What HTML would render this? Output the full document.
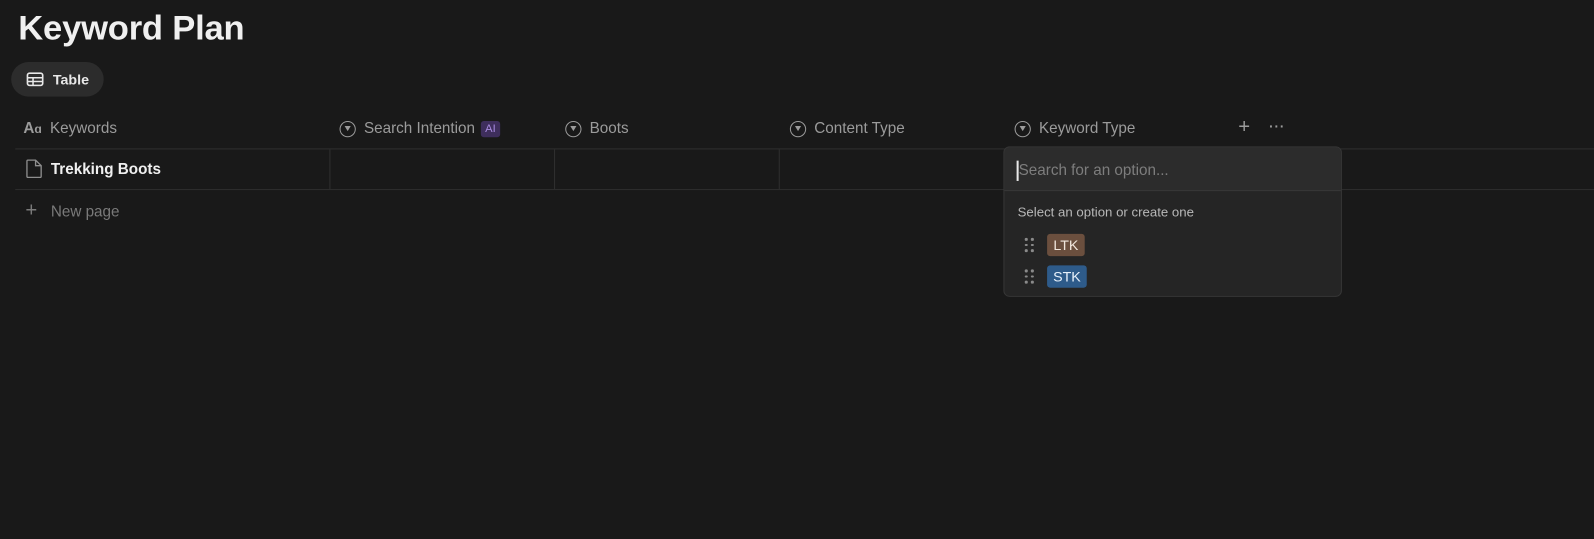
<!DOCTYPE html>
<html><head><meta charset="utf-8"><style>
*{box-sizing:border-box;margin:0;padding:0}
body{width:1594px;height:539px;background:#191919;font-family:"Liberation Sans",sans-serif;color:#d4d4d4;position:relative;overflow:hidden}
#w{position:absolute;left:0;top:0;width:1568px;height:530px;transform:scale(1.0166);transform-origin:0 0}
.abs{position:absolute}
h1{position:absolute;left:18px;top:9px;font-size:34px;font-weight:bold;color:#f0f0f0;letter-spacing:-0.2px}
.tab{left:11px;top:61px;width:91px;height:34px;border-radius:17px;background:#2c2c2c;color:#e8e8e8;font-size:14px;font-weight:bold;display:flex;align-items:center;padding-left:15px;gap:9px}
.hd{top:118px;font-size:15px;color:#9b9b9b;display:flex;align-items:center;gap:8px}
.ico{width:16px;height:16px;border:1.6px solid #9b9b9b;border-radius:50%;position:relative}
.ico:after{content:"";position:absolute;left:3.5px;top:4px;border-left:3px solid transparent;border-right:3px solid transparent;border-top:5px solid #9b9b9b}
.hline{height:1px;background:#2f2f2f}
.vline{width:1px;background:#2f2f2f;top:147px;height:39px}
.dots{display:grid;grid-template-columns:3px 3px;gap:3px 3px}
.dots i{width:2.5px;height:2.5px;border-radius:50%;background:#8a8a8a;display:block}
</style></head><body><div id="w">
<h1>Keyword Plan</h1>
<div class="abs tab"><svg width="17" height="14" viewBox="0 0 17 14"><rect x="1" y="1" width="15" height="12" rx="2" fill="none" stroke="#e8e8e8" stroke-width="1.6"/><path d="M1 5.5H16M1 9.2H16M6.5 5.5V13" stroke="#e8e8e8" stroke-width="1.5"/></svg>Table</div>
<div class="abs hd" style="left:23px"><span style="font-weight:bold;font-size:15px;color:#9b9b9b">A<span style="font-size:12px">ɑ</span></span>Keywords</div>
<div class="abs hd" style="left:334px"><div class="ico"></div>Search Intention <span style="background:#3e2e5c;color:#a98be0;font-size:11px;padding:2px 4px;border-radius:3px;margin-left:-2px">AI</span></div>
<div class="abs hd" style="left:556px"><div class="ico"></div>Boots</div>
<div class="abs hd" style="left:777px"><div class="ico"></div>Content Type</div>
<div class="abs hd" style="left:998px"><div class="ico"></div>Keyword Type</div>
<div class="abs" style="left:1218px;top:114px;font-size:20px;color:#9b9b9b">+</div>
<div class="abs" style="left:1247px;top:114px;font-size:19px;color:#9b9b9b;letter-spacing:-1px">···</div>
<div class="abs hline" style="left:15px;top:146px;width:1553px"></div>
<div class="abs hline" style="left:15px;top:186px;width:1553px"></div>
<div class="abs vline" style="left:324px"></div>
<div class="abs vline" style="left:545px"></div>
<div class="abs vline" style="left:766px"></div>
<svg class="abs" style="left:25px;top:156px" width="17" height="20" viewBox="0 0 17 20"><path d="M2 1.5H10L15.5 7V17.5Q15.5 18.5 14.5 18.5H2.5Q1.5 18.5 1.5 17.5V2.5Q1.5 1.5 2.5 1.5ZM10 1.5V7H15.5" fill="none" stroke="#8e8e8e" stroke-width="1.3"/></svg>
<div class="abs" style="left:50px;top:158px;font-size:15px;font-weight:bold;color:#f0f0f0">Trekking Boots</div>
<div class="abs" style="left:25px;top:197px;font-size:20px;color:#7a7a7a;line-height:20px">+</div>
<div class="abs" style="left:50px;top:200px;font-size:15px;color:#7a7a7a">New page</div>
<div class="abs" style="left:987px;top:144px;width:333px;height:148px;background:#252525;border:1px solid #363636;border-radius:6px;overflow:hidden">
 <div style="height:43px;background:#2c2c2c;border-bottom:1px solid #383838;position:relative">
  <div class="abs" style="left:12px;top:13px;width:2px;height:20px;background:#e8e8e8"></div>
  <div class="abs" style="left:14px;top:14px;font-size:15px;color:#7d7d7d">Search for an option...</div>
 </div>
 <div class="abs" style="left:13px;top:56px;font-size:13px;color:#b8b8b8">Select an option or create one</div>
 <div class="abs dots" style="left:20px;top:89px"><i></i><i></i><i></i><i></i><i></i><i></i></div>
 <div class="abs" style="left:42px;top:85px;width:37px;height:22px;background:#6b4f3e;border-radius:3px;font-size:14px;color:#f0e6dc;text-align:center;line-height:22px">LTK</div>
 <div class="abs dots" style="left:20px;top:120px"><i></i><i></i><i></i><i></i><i></i><i></i></div>
 <div class="abs" style="left:42px;top:116px;width:39px;height:22px;background:#2e5b8a;border-radius:3px;font-size:14px;color:#e6f0fa;text-align:center;line-height:22px">STK</div>
</div>
</div></body></html>
